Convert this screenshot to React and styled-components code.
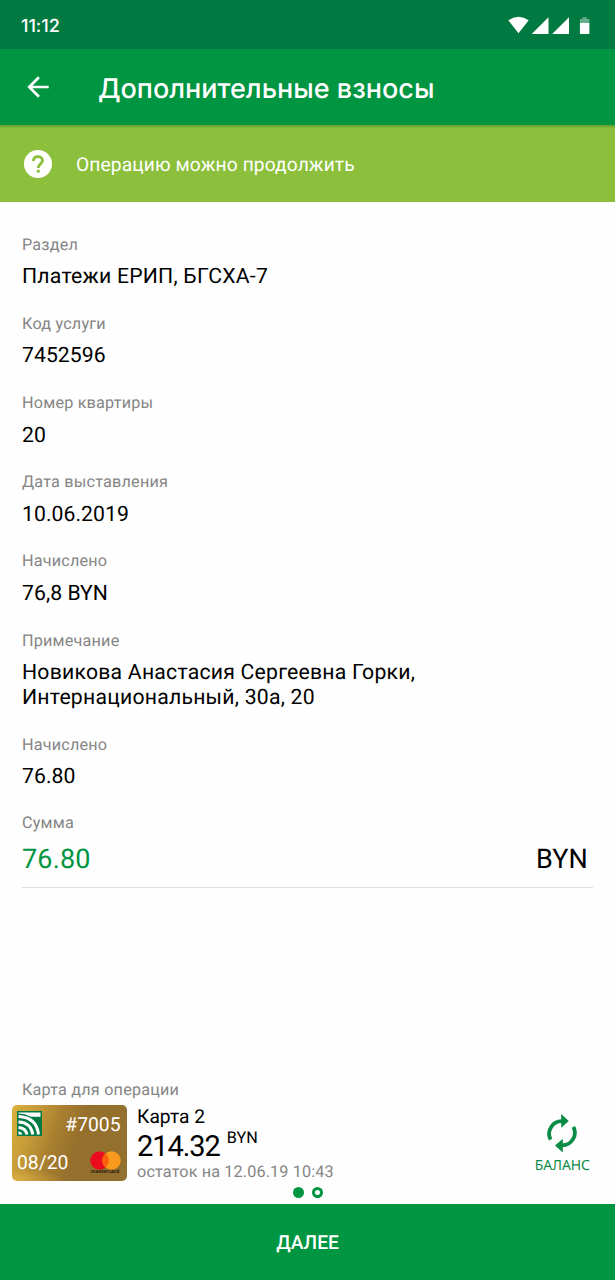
import React, { Component } from 'react'
import styled, { createGlobalStyle } from 'styled-components'

const GlobalStyle = createGlobalStyle`
    * {
        box-sizing: border-box;
    }
    body {
        margin: 0;
        background-color: white;
        font-family: Roboto, "Liberation Sans", sans-serif;
        text-rendering: geometricPrecision;
    }
`

const StyledScreen = styled.div`
    display: flex;
    flex-direction: column;
    height: 1280px;
    overflow: hidden;
    background-color: #fefefe;
    color: black;
`

const StyledStatusBar = styled.div`
    display: flex;
    align-items: center;
    justify-content: space-between;
    height: 49px;
    flex-shrink: 0;
    padding: 2px 22px 0 21px;
    background-color: #007a40;
    color: white;
    font-family: Inter, Roboto, sans-serif;
    font-size: 18px;
    font-weight: 500;
    letter-spacing: -0.05px;
    span {
        padding-top: 2px;
    }
    svg {
        display: block;
    }
`

const StyledHeader = styled.div`
    display: flex;
    align-items: center;
    height: 76px;
    flex-shrink: 0;
    padding: 0 22px;
    background-color: #009540;
    svg {
        display: block;
        margin-right: 44px;
    }
    h1 {
        margin: 3px 0 0;
        color: white;
        font-family: Inter, Roboto, sans-serif;
        font-size: 27px;
        font-weight: 500;
        line-height: 34px;
        letter-spacing: 0;
        white-space: nowrap;
    }
`

const StyledBanner = styled.div`
    display: flex;
    align-items: center;
    height: 77px;
    flex-shrink: 0;
    padding: 0 21px;
    background-color: #8bbf3c;
    box-shadow: inset 0 3px 2px -1px rgba(40, 110, 20, 0.35);
    color: white;
    font-size: 19.2px;
    letter-spacing: 0.11px;
    svg {
        display: block;
        margin-right: 21px;
    }
    span {
        padding-top: 2px;
    }
`

const StyledFields = styled.div`
    display: flex;
    flex-direction: column;
    gap: 25.6px;
    padding: 33.6px 22px 0;
`

const StyledLabel = styled.div`
    color: #858585;
    font-size: 16.2px;
    line-height: 18px;
    letter-spacing: 0.2px;
`

const StyledValue = styled.div`
    margin-top: 10.6px;
    font-size: 21.2px;
    line-height: 25px;
    letter-spacing: ${props => props.$text ? '0.23px' : '0.05px'};
    white-space: pre-line;
`

const StyledSum = styled.div`
    margin-top: -1px;
`

const StyledAmount = styled.div`
    display: flex;
    justify-content: space-between;
    height: 56px;
    padding: 11px 5px 0 0;
    border-bottom: 1px solid #dedede;
    font-size: 27px;
    line-height: 32px;
    letter-spacing: 0.15px;
    span:first-child {
        color: #009540;
    }
`

const StyledFooter = styled.div`
    margin-top: auto;
`

const StyledFooterLabel = styled(StyledLabel)`
    padding-left: 22px;
`

const StyledCardRow = styled.div`
    display: flex;
    height: 77px;
    margin-top: 6px;
    padding: 0 25px 0 11.5px;
`

const StyledCard = styled.div`
    display: flex;
    flex-direction: column;
    justify-content: space-between;
    width: 115px;
    height: 76px;
    flex-shrink: 0;
    padding: 6px 6px 4px 5.5px;
    border-radius: 5px;
    background:
        radial-gradient(ellipse 60px 14px at 0 100%, rgba(225, 180, 70, 0.8), rgba(225, 180, 70, 0) 90%),
        linear-gradient(108deg, #dcb13c 0%, #c49a38 20%, #a87e30 38%, #96702c 55%, #92702e 100%);
    color: white;
    font-size: 19.3px;
    line-height: 25px;
    svg {
        display: block;
    }
`

const StyledCardLine = styled.div`
    display: flex;
    justify-content: space-between;
    height: ${props => props.$tall ? '28px' : '25px'};
`

const StyledCardNumber = styled.span`
    padding-top: 1px;
`

const StyledMastercard = styled.div`
    display: flex;
    flex-direction: column;
    align-items: center;
    padding-top: 1.5px;
    color: #1a1208;
    font-family: Inter, sans-serif;
    font-size: 5.2px;
    font-weight: 600;
    line-height: 5px;
`

const StyledCardInfo = styled.div`
    padding-left: 10.5px;
    flex: 1;
`

const StyledCardName = styled.div`
    font-size: 19.2px;
    line-height: 23px;
    letter-spacing: 0.05px;
`

const StyledBalance = styled.div`
    display: flex;
    align-items: flex-start;
    height: 34px;
    font-size: 29px;
    line-height: 39px;
    letter-spacing: -1.05px;
    span {
        margin-left: 7px;
        font-size: 16.2px;
        line-height: 20px;
        letter-spacing: 0;
    }
`

const StyledRest = styled.div`
    color: #858585;
    font-size: 16.2px;
    line-height: 20px;
    letter-spacing: 0.15px;
`

const StyledRefresh = styled.div`
    display: flex;
    flex-direction: column;
    align-items: center;
    padding-top: 8px;
    color: #0a8c46;
    font-family: "Noto Sans", sans-serif;
    font-size: 13.9px;
    line-height: 25px;
    svg {
        display: block;
    }
`

const StyledDots = styled.div`
    display: flex;
    justify-content: center;
    gap: 8px;
    height: 23px;
    padding-top: 5px;
`

const StyledDot = styled.div`
    width: 11px;
    height: 11px;
    border: 3px solid #009540;
    border-radius: 50%;
    background-color: ${props => props.$active ? '#009540' : 'white'};
`

const StyledButton = styled.div`
    display: flex;
    align-items: center;
    justify-content: center;
    height: 76px;
    margin-top: -1px;
    background-color: #009540;
    color: white;
    font-size: 19.2px;
    font-weight: 500;
`

const StatusIcons = () => (
    <svg width="86" height="20" viewBox="0 0 86 20" fill="white">
        <path d="M1.3 4.3Q11.5-3 21.7 4.3L11.5 17.2Z" />
        <path d="M41.5 1.2V18H24.7Z" />
        <path d="M62 1.2V18H45.2Z" />
        <path d="M72.9 3h2.6V1.3h4.2V3h2.7v4h-9.5z" opacity="0.4" />
        <path d="M72.9 7h9.5v10.3q0 .7-.7.7h-8.1q-.7 0-.7-.7z" />
    </svg>
)

const BackArrow = () => (
    <svg width="32" height="32" viewBox="0 0 24 24" fill="white">
        <path d="M20 11H7.83l5.59-5.59L12 4l-8 8 8 8 1.41-1.41L7.83 13H20v-2z" />
    </svg>
)

const HelpIcon = () => (
    <svg width="34" height="34" viewBox="0 0 24 24">
        <circle cx="12" cy="12" r="9.9" fill="white" />
        <path fill="none" stroke="#8bbf3c" strokeWidth="2" d="M8.8 9.8C8.8 7.8 10.2 6.8 12 6.8S15.2 7.9 15.2 9.6C15.2 11.7 12.1 12.1 12.1 14.8" />
        <path fill="#8bbf3c" d="M11.1 16.1h2.1v2h-2.1z" />
    </svg>
)

const BankLogo = () => (
    <svg width="25" height="25" viewBox="0 0 25 25">
        <path fill="#047a45" d="M0 0h25v25H0z" />
        <path fill="white" d="M1.5 1.5h22v4.3H14Q8 2.6 1.5 2.6z" />
        <path fill="none" stroke="white" strokeWidth="3" d="M1.5 5.6Q19.5 6.3 21.5 23.5M1.5 11Q14 11.5 15.8 23.5M1.5 16.5Q8.7 17 10 23.5" />
        <path fill="white" d="M1.5 20.2q3.2.4 4 3.3h-4z" />
    </svg>
)

const RefreshIcon = () => (
    <svg width="32" height="40" viewBox="0 0 32 40">
        <g fill="none" stroke="#0a8c46" strokeWidth="3.8">
            <path d="M4.6 26.6A12.6 12.6 0 0 1 16.5 8.2" />
            <path d="M27.4 13.8A12.6 12.6 0 0 1 15.5 32.2" />
        </g>
        <path fill="#0a8c46" d="M15.2 1L22.8 8 15.2 14.7zM16.8 25.7V39.4L9 32.4z" />
    </svg>
)

const fields = [
    { label: 'Раздел', value: 'Платежи ЕРИП, БГСХА-7', text: true },
    { label: 'Код услуги', value: '7452596' },
    { label: 'Номер квартиры', value: '20' },
    { label: 'Дата выставления', value: '10.06.2019' },
    { label: 'Начислено', value: '76,8 BYN' },
    { label: 'Примечание', value: 'Новикова Анастасия Сергеевна Горки,\nИнтернациональный, 30а, 20', text: true },
    { label: 'Начислено', value: '76.80' },
]

export default class App extends Component {

    state = {
        activeCard: 0
    }

    render() {
        const fieldList = fields.map((field, index) => (
            <div key={index}>
                <StyledLabel>{field.label}</StyledLabel>
                <StyledValue $text={field.text}>{field.value}</StyledValue>
            </div>
        ))

        return (
            <StyledScreen>
                <GlobalStyle />
                <StyledStatusBar>
                    <span>11:12</span>
                    <StatusIcons />
                </StyledStatusBar>
                <StyledHeader>
                    <BackArrow />
                    <h1>Дополнительные взносы</h1>
                </StyledHeader>
                <StyledBanner>
                    <HelpIcon />
                    <span>Операцию можно продолжить</span>
                </StyledBanner>

                <StyledFields>
                    {fieldList}
                    <StyledSum>
                        <StyledLabel>Сумма</StyledLabel>
                        <StyledAmount>
                            <span>76.80</span>
                            <span>BYN</span>
                        </StyledAmount>
                    </StyledSum>
                </StyledFields>

                <StyledFooter>
                    <StyledFooterLabel>Карта для операции</StyledFooterLabel>
                    <StyledCardRow>
                        <StyledCard>
                            <StyledCardLine>
                                <BankLogo />
                                <StyledCardNumber>#7005</StyledCardNumber>
                            </StyledCardLine>
                            <StyledCardLine $tall>
                                <StyledCardNumber>08/20</StyledCardNumber>
                                <StyledMastercard>
                                    <svg width="31" height="19" viewBox="0 0 31 19">
                                        <circle cx="9.5" cy="9.5" r="9.2" fill="#eb0a1e" />
                                        <circle cx="21.5" cy="9.5" r="9.2" fill="#f79a1e" />
                                        <path fill="#fb5f0b" d="M15.5 2.5a9.2 9.2 0 0 1 0 14 9.2 9.2 0 0 1 0-14z" />
                                    </svg>
                                    mastercard
                                </StyledMastercard>
                            </StyledCardLine>
                        </StyledCard>
                        <StyledCardInfo>
                            <StyledCardName>Карта 2</StyledCardName>
                            <StyledBalance>214.32<span>BYN</span></StyledBalance>
                            <StyledRest>остаток на 12.06.19 10:43</StyledRest>
                        </StyledCardInfo>
                        <StyledRefresh>
                            <RefreshIcon />
                            БАЛАНС
                        </StyledRefresh>
                    </StyledCardRow>
                    <StyledDots>
                        <StyledDot $active={this.state.activeCard === 0} />
                        <StyledDot $active={this.state.activeCard === 1} />
                    </StyledDots>
                    <StyledButton>ДАЛЕЕ</StyledButton>
                </StyledFooter>
            </StyledScreen>
        )
    }
}
